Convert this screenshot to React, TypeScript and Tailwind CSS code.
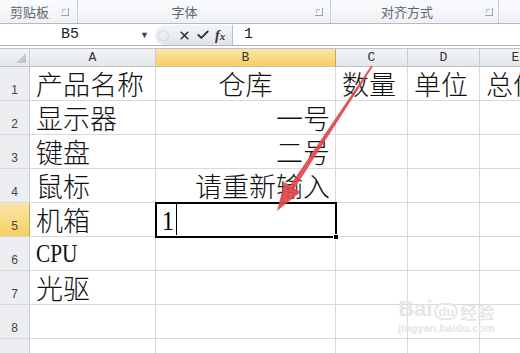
import { X, Check } from "lucide-react";

const COLS = [
  { key: "A", w: "w-[126px]" },
  { key: "B", w: "w-[180px]" },
  { key: "C", w: "w-[72px]" },
  { key: "D", w: "w-[72px]" },
  { key: "E", w: "w-[72px]" },
];

type Cell = { text: string; align?: "left" | "center" | "right"; serif?: boolean };

const ROWS: Record<number, Record<string, Cell>> = {
  1: {
    A: { text: "产品名称" },
    B: { text: "仓库", align: "center" },
    C: { text: "数量" },
    D: { text: "单位" },
    E: { text: "总价" },
  },
  2: { A: { text: "显示器" }, B: { text: "一号", align: "right" } },
  3: { A: { text: "键盘" }, B: { text: "二号", align: "right" } },
  4: { A: { text: "鼠标" }, B: { text: "请重新输入", align: "right" } },
  5: { A: { text: "机箱" } },
  6: { A: { text: "CPU", serif: true } },
  7: { A: { text: "光驱" } },
  8: {},
  9: {},
};

const CJK = "font-['Noto_Sans_CJK_SC',sans-serif]";

function Launcher() {
  return (
    <span className="relative inline-block h-[8px] w-[8px] border-r border-b border-[#9aa3ae]">
      <span className="absolute left-[1px] top-[1px] h-[4px] w-[4px] border-l border-t border-[#b6bcc5]" />
    </span>
  );
}

function Ribbon() {
  return (
    <div className={`flex h-[24px] border-b border-[#b3b9c2] bg-gradient-to-b from-[#fafbfc] to-[#eef1f5] text-[13px] text-[#62676e] ${CJK}`}>
      <div className="flex w-[78px] items-center border-r border-[#c9ced6] pl-[10px]">
        <span className="flex-1">剪贴板</span>
        <span className="mr-[8px] flex items-center"><Launcher /></span>
      </div>
      <div className="flex w-[253px] items-center border-r border-[#c9ced6]">
        <span className="flex-1 pl-[16px] text-center">字体</span>
        <span className="mr-[7px] ml-[40px] flex items-center"><Launcher /></span>
      </div>
      <div className="flex w-[168px] items-center border-r border-[#c9ced6]">
        <span className="flex-1 pl-[8px] text-center">对齐方式</span>
        <span className="mr-[5px] ml-[10px] flex items-center"><Launcher /></span>
      </div>
      <div className="flex-1" />
    </div>
  );
}

function FormulaBar() {
  return (
    <div className="mt-[1px] flex h-[21px] items-center border-b border-[#aeb4bc] bg-white">
      <div className="flex h-full w-[155px] items-center">
        <span className="flex-1 text-center font-['Liberation_Mono',monospace] text-[15px] text-[#222]">B5</span>
        <span className="mr-[6px] text-[9px] text-[#444]">▼</span>
      </div>
      <div className="flex h-[20px] w-[78px] items-center gap-[5px] rounded-l-full border-r border-[#b9bfc7] bg-gradient-to-b from-[#f4f5f7] to-[#e1e4e8] pl-[3px]">
        <span className="h-[11px] w-[11px] rounded-full border border-[#d2d6dc] bg-[#eceef1]" />
        <X className="ml-[4px] h-[13px] w-[13px] text-[#333]" strokeWidth={3} />
        <Check className="h-[14px] w-[14px] text-[#333]" strokeWidth={3.2} />
        <span className="font-['Liberation_Serif',serif] text-[14px] font-bold italic text-[#333]">
          f<span className="text-[11px]">x</span>
        </span>
      </div>
      <span className="ml-[11px] font-['Liberation_Mono',monospace] text-[15px] text-[#222]">1</span>
    </div>
  );
}

function ColHeader() {
  return (
    <div className="mt-[2px] flex h-[19px] border-t border-b border-[#bfc4cb] font-['Liberation_Mono',monospace] text-[13px] text-[#333]">
      <div className="relative w-[30px] shrink-0 border-r border-[#c8ccd2] bg-gradient-to-b from-[#f3f4f6] to-[#e4e7eb]">
        <div className="absolute right-[3px] bottom-[3px] h-0 w-0 border-l-[10px] border-b-[10px] border-l-transparent border-b-[#c3c7cd]" />
      </div>
      {COLS.map((c) => (
        <div
          key={c.key}
          className={`${c.w} flex shrink-0 items-center justify-center border-r leading-none ${
            c.key === "B"
              ? "border-[#c9a650] bg-gradient-to-b from-[#fbe6a8] to-[#f6cf5e]"
              : "border-[#c8ccd2] bg-gradient-to-b from-[#f3f4f6] to-[#e4e7eb]"
          }`}
        >
          {c.key}
        </div>
      ))}
    </div>
  );
}

function Row({ n }: { n: number }) {
  const cells = ROWS[n];
  const selected = n === 5;
  return (
    <div className="flex h-[34px] border-b border-[#d9d9d9]">
      <div
        className={`flex w-[30px] shrink-0 items-end justify-center border-r pb-[1px] font-['Liberation_Sans',sans-serif] text-[12px] text-[#444] ${
          selected
            ? "border-[#c9a650] bg-gradient-to-b from-[#fbe6a8] to-[#f6cf5e]"
            : "border-[#c8ccd2] bg-[#eceef1]"
        }`}
      >
        {n}
      </div>
      {COLS.map((c) => {
        const cell = cells[c.key];
        const isSel = selected && c.key === "B";
        if (isSel) {
          return (
            <div key={c.key} className={`${c.w} relative shrink-0 border-r border-[#d9d9d9]`}>
              <div className="absolute -left-[1px] -top-[1px] h-[36px] w-[182px] border-2 border-black">
                <div className="flex h-full items-end pb-[1px] pl-[5px]">
                  <span className="inline-block origin-left scale-x-[0.85] font-['Liberation_Serif',serif] text-[28px] leading-none text-black">1</span>
                  <span className="h-full w-[1px] bg-black" />
                </div>
                <div className="absolute -right-[4px] -bottom-[4px] h-[6px] w-[6px] border border-white bg-black" />
              </div>
            </div>
          );
        }
        return (
          <div
            key={c.key}
            className={`${c.w} flex shrink-0 items-end whitespace-nowrap border-r border-[#d9d9d9] pb-[3px] text-[27px] leading-none text-[#111] ${
              cell?.align === "center" ? "justify-center" : cell?.align === "right" ? "justify-end pr-[5px]" : "pl-[6px]"
            } ${cell?.serif ? "font-['Liberation_Serif',serif] font-normal" : `${CJK} font-light`}`}
          >
            {cell?.serif ? (
              <span className="inline-block origin-left scale-x-[0.82] text-[26px]">{cell.text}</span>
            ) : (
              cell?.text ?? ""
            )}
          </div>
        );
      })}
    </div>
  );
}

export default function App() {
  return (
    <div className="relative h-[353px] w-[520px] overflow-hidden bg-white">
      <Ribbon />
      <FormulaBar />
      <ColHeader />
      {[1, 2, 3, 4, 5, 6, 7, 8, 9].map((n) => (
        <Row key={n} n={n} />
      ))}

      <svg className="pointer-events-none absolute left-0 top-0" width="520" height="353">
        <polygon
          points="277,211 284.5,182 290,185.5 371.3,65.6 372.8,66.6 294.5,188.5 300.5,192"
          fill="#e0464b"
          fillOpacity="0.92"
        />
      </svg>

      <div className="pointer-events-none absolute left-[398px] top-[298px] flex flex-col items-center text-[#e6e6e6]">
        <div className="flex items-end gap-[2px]">
          <span className="font-['Liberation_Sans',sans-serif] text-[22px] font-bold leading-none">Bai</span>
          <span className="rounded-full border-2 border-[#e6e6e6] px-[2px] font-['Liberation_Sans',sans-serif] text-[13px] font-bold leading-none">du</span>
          <span className={`${CJK} text-[17px] font-bold leading-none`}>经验</span>
        </div>
        <span className="mt-[3px] font-['Liberation_Sans',sans-serif] text-[11px] font-bold leading-none">jingyan.baidu.com</span>
      </div>
    </div>
  );
}
